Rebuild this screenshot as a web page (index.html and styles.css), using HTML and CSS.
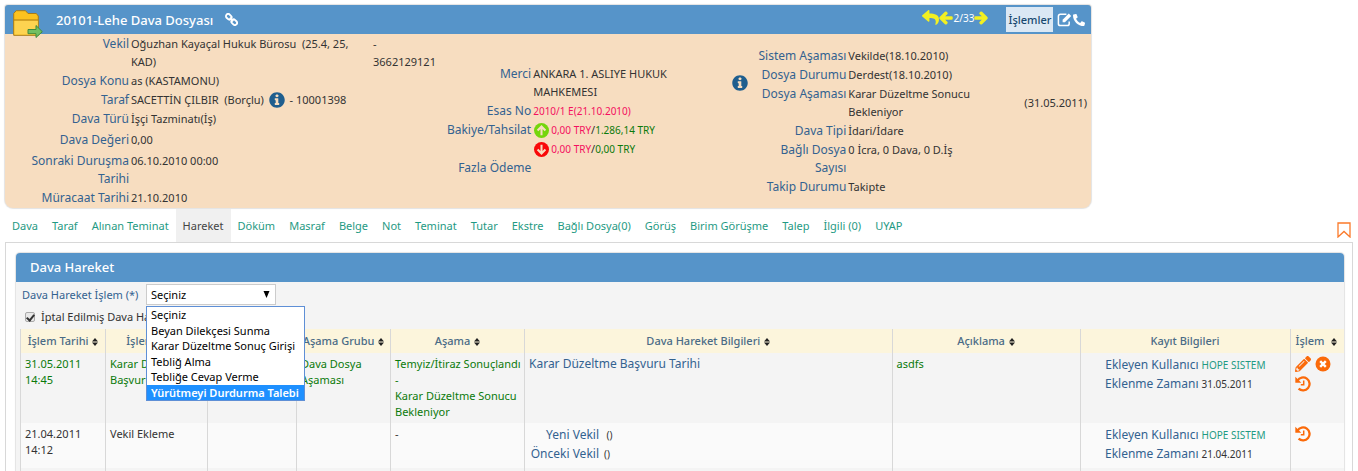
FILE: index.html
```html
<!DOCTYPE html>
<html lang="tr">
<head>
<meta charset="utf-8">
<title>Dava Dosyası</title>
<link rel="stylesheet" href="styles.css">
</head>
<body>
<svg class="sprite" aria-hidden="true">
  <symbol id="i-info" viewBox="0 0 512 512"><path d="M256 8C119.043 8 8 119.083 8 256c0 136.997 111.043 248 248 248s248-111.003 248-248C504 119.083 392.957 8 256 8zm0 70c30 0 50 18 50 44s-20 44-50 44-50-18-50-44 20-44 50-44zm72 322c0 8-5 14-12 14h-120c-7 0-12-6-12-14v-34c0-8 5-12 12-12h18v-94h-18c-7 0-12-5-12-12v-34c0-8 5-12 12-12h90c7 0 12 5 12 12v140h18c7 0 12 5 12 12v34z"/></symbol>
  <symbol id="i-reply" viewBox="0 0 512 512"><path d="M8.309 189.836L184.313 37.851C199.719 24.546 224 35.347 224 56.015v80.053c160.629 1.839 288 34.032 288 186.258 0 61.441-39.581 122.309-83.333 154.132-13.653 9.931-33.111-2.533-28.077-18.631 45.344-145.012-21.507-183.51-176.59-185.742V360c0 20.7-24.3 31.453-39.687 18.164l-176.004-152c-11.071-9.562-11.086-26.753 0-36.328z"/></symbol>
  <symbol id="i-arrow" viewBox="0 0 448 512"><path stroke="currentColor" stroke-width="44" d="M257.5 445.1l-22.2 22.2c-9.4 9.4-24.6 9.4-33.9 0L7 273c-9.4-9.4-9.4-24.6 0-33.9L201.4 44.7c9.4-9.4 24.6-9.4 33.9 0l22.2 22.2c9.5 9.5 9.3 25-.4 34.3L136.6 216H424c13.3 0 24 10.7 24 24v32c0 13.3-10.7 24-24 24H136.6l120.5 114.8c9.8 9.3 10 24.8.4 34.3z"/></symbol>
  <symbol id="i-phone" viewBox="0 0 512 512"><path d="M493.4 24.6l-104-24c-11.3-2.6-22.9 3.3-27.5 13.9l-48 112c-4.2 9.8-1.4 21.3 6.9 28l60.6 49.6c-36 76.7-98.9 140.5-177.2 177.2l-49.6-60.6c-6.8-8.3-18.2-11.1-28-6.9l-112 48C3.9 366.5-2 378.1.6 389.4l24 104C27.1 504.2 36.7 512 48 512c256.1 0 464-207.5 464-464 0-11.2-7.7-20.9-18.6-23.4z"/></symbol>
  <symbol id="i-pencil" viewBox="0 0 512 512"><path d="M497.9 142.1l-46.1 46.1c-4.7 4.7-12.3 4.7-17 0l-111-111c-4.7-4.7-4.7-12.3 0-17l46.1-46.1c18.7-18.7 49.1-18.7 67.9 0l60.1 60.1c18.8 18.7 18.8 49.1 0 67.9zM284.2 99.8L21.6 362.4.4 483.9c-2.9 16.4 11.4 30.6 27.8 27.8l121.5-21.3 262.6-262.6c4.7-4.7 4.7-12.3 0-17l-111-111c-4.8-4.7-12.4-4.7-17.1 0zM124.1 339.9c-5.5-5.5-5.5-14.3 0-19.8l154-154c5.5-5.5 14.3-5.5 19.8 0s5.5 14.3 0 19.8l-154 154c-5.5 5.5-14.3 5.5-19.8 0zM88 424h48v36.3l-64.5 11.3-31.1-31.1L51.7 376H88v48z"/></symbol>
  <symbol id="i-edit" viewBox="0 0 16 16"><path d="M10 2.5H3.5a2 2 0 0 0-2 2v8a2 2 0 0 0 2 2h7.500a2 2 0 0 0 2-2V10" fill="none" stroke="currentColor" stroke-width="1.600"/><path d="M6 8.300 12.600 1.700l2.500 2.500L8.500 10.800H6z"/></symbol>
  <symbol id="i-link" viewBox="0 0 16 16"><g fill="none" stroke="currentColor" stroke-width="2.300" transform="rotate(45 8 8)"><rect x="-.5" y="5.300" width="7.500" height="5.400" rx="2.700"/><rect x="9" y="5.300" width="7.500" height="5.400" rx="2.700"/><path d="M5 8h6"/></g></symbol>
  <symbol id="i-up" viewBox="0 0 16 16"><circle cx="8" cy="8" r="8"/><path d="M8 13V4M3.800 8 8 3.800 12.200 8" fill="none" stroke="#f7ddc0" stroke-width="2.200"/></symbol>
  <symbol id="i-cancel" viewBox="0 0 16 16"><circle cx="8" cy="8" r="7.500"/><path d="M5.200 5.200l5.600 5.600M10.800 5.200l-5.600 5.600" stroke="#fff" stroke-width="2.400"/></symbol>
  <symbol id="i-history" viewBox="0 0 16 16"><path d="M2.500 4.600A6.500 6.500 0 1 1 3.600 12.700" fill="none" stroke="currentColor" stroke-width="2.300"/><path d="M.3.800v6h6z"/><path d="M8.700 4.500v4.300H5.800" fill="none" stroke="currentColor" stroke-width="1.500"/></symbol>
  <symbol id="i-sort" viewBox="0 0 6 8"><path d="M3 0 6 3.400H0zM3 8 0 4.600h6z"/></symbol>
</svg>

<header class="case">
  <div class="case-bar">
    <svg class="folder" viewBox="0 0 30 28" aria-hidden="true">
      <path d="M.7 25.300V3.500l2.500-2.800h9.300l2.500 2.800h8.300l2 2.500v19.300z" fill="#fcc21f" stroke="#a87b18"/>
      <path d="M1.500 10.500h23.300v14H1.500z" fill="#fdd350"/><path d="M1 10h24" stroke="#a87b18"/>
      <path d="M15 19.500h8v-4l6.300 6.200-6.300 5.800v-3.800h-8z" fill="#72bf62" stroke="#3f8a3a"/>
    </svg>
    <h1>20101-Lehe Dava Dosyası</h1>
    <a class="link" href="#" aria-label="Bağlantı"><svg><use href="#i-link"/></svg></a>
    <nav class="pager" aria-label="Dosyalar">
      <a href="#" aria-label="Geri"><svg><use href="#i-reply"/></svg></a>
      <a href="#" aria-label="Önceki"><svg><use href="#i-arrow"/></svg></a>
      <span>2/33</span>
      <a href="#" aria-label="Sonraki"><svg class="flip"><use href="#i-arrow"/></svg></a>
    </nav>
    <button class="actions" type="button">İşlemler</button>
    <div class="tools">
      <a href="#" aria-label="Düzenle"><svg><use href="#i-edit"/></svg></a>
      <a href="#" aria-label="Telefon"><svg class="flip small"><use href="#i-phone"/></svg></a>
    </div>
  </div>
  <div class="case-body">
    <dl class="facts facts-party">
      <dt>Vekil</dt><dd>Oğuzhan Kayaçal Hukuk Bürosu &nbsp;(25.4, 25, KAD)</dd><dd class="extra">-<br>3662129121</dd>
      <dt>Dosya Konu</dt><dd>as (KASTAMONU)</dd>
      <dt>Taraf</dt><dd>SACETTİN ÇILBIR &nbsp;(Borçlu) <svg class="info"><use href="#i-info"/></svg> - 10001398</dd>
      <dt>Dava Türü</dt><dd>İşçi Tazminatı(İş)</dd>
      <dt>Dava Değeri</dt><dd>0,00</dd>
      <dt>Sonraki Duruşma Tarihi</dt><dd>06.10.2010 00:00</dd>
      <dt>Müracaat Tarihi</dt><dd>21.10.2010</dd>
    </dl>
    <dl class="facts facts-court">
      <dt>Merci</dt><dd>ANKARA 1. ASLIYE HUKUK MAHKEMESI</dd><dd class="extra"><svg class="info"><use href="#i-info"/></svg></dd>
      <dt>Esas No</dt><dd class="due">2010/1 E(21.10.2010)</dd>
      <dt>Bakiye/Tahsilat</dt>
      <dd class="money">
        <div><svg class="up"><use href="#i-up"/></svg><span class="due">0,00 TRY</span>/<span class="paid">1.286,14 TRY</span></div>
        <div><svg class="down"><use href="#i-up"/></svg><span class="due">0,00 TRY</span>/<span class="paid">0,00 TRY</span></div>
      </dd>
      <dt>Fazla Ödeme</dt><dd></dd>
    </dl>
    <dl class="facts facts-state">
      <dt>Sistem Aşaması</dt><dd>Vekilde(18.10.2010)</dd>
      <dt>Dosya Durumu</dt><dd>Derdest(18.10.2010)</dd>
      <dt>Dosya Aşaması</dt><dd>Karar Düzeltme Sonucu Bekleniyor</dd><dd class="extra">(31.05.2011)</dd>
      <dt>Dava Tipi</dt><dd>İdari/İdare</dd>
      <dt>Bağlı Dosya Sayısı</dt><dd>0 İcra, 0 Dava, 0 D.İş</dd>
      <dt>Takip Durumu</dt><dd>Takipte</dd>
    </dl>
  </div>
</header>

<nav class="tabs" aria-label="Sekmeler">
  <a href="#">Dava</a><a href="#">Taraf</a><a href="#">Alınan Teminat</a><a href="#" class="active" aria-current="page">Hareket</a><a href="#">Döküm</a><a href="#">Masraf</a><a href="#">Belge</a><a href="#">Not</a><a href="#">Teminat</a><a href="#">Tutar</a><a href="#">Ekstre</a><a href="#">Bağlı Dosya(0)</a><a href="#">Görüş</a><a href="#">Birim Görüşme</a><a href="#">Talep</a><a href="#">İlgili (0)</a><a href="#">UYAP</a>
  <button class="bookmark" type="button" aria-label="Yer imi"><svg viewBox="0 0 14 16"><path d="M1 1h12v14L7 9.500 1 15z" fill="none" stroke="currentColor" stroke-width="1.300"/></svg></button>
</nav>

<main class="pane">
  <section class="panel">
    <h2>Dava Hareket</h2>
    <form class="filters">
      <div class="field">
        <label for="islem">Dava Hareket İşlem (*)</label>
        <div class="combo">
          <select id="islem"><option>Seçiniz</option></select>
          <svg class="caret" viewBox="0 0 6 7" aria-hidden="true"><path d="M0 0h6L3 7z"/></svg>
          <ul class="options" role="listbox" aria-label="Dava Hareket İşlem">
            <li role="option">Seçiniz</li>
            <li role="option">Beyan Dilekçesi Sunma</li>
            <li role="option">Karar Düzeltme Sonuç Girişi</li>
            <li role="option">Tebliğ Alma</li>
            <li role="option">Tebliğe Cevap Verme</li>
            <li role="option" class="on" aria-selected="true">Yürütmeyi Durdurma Talebi</li>
          </ul>
        </div>
      </div>
      <div class="check">
        <input type="checkbox" id="iptal" checked>
        <label for="iptal">İptal Edilmiş Dava Hareket</label>
      </div>
    </form>
    <table>
      <colgroup><col class="c-date"><col class="c-op"><col class="c-note"><col class="c-group"><col class="c-stage"><col class="c-data"><col class="c-desc"><col class="c-rec"><col class="c-act"></colgroup>
      <thead>
        <tr>
          <th>İşlem Tarihi <svg><use href="#i-sort"/></svg></th>
          <th>İşlem Tipi <svg><use href="#i-sort"/></svg></th>
          <th></th>
          <th>Aşama Grubu <svg><use href="#i-sort"/></svg></th>
          <th>Aşama <svg><use href="#i-sort"/></svg></th>
          <th>Dava Hareket Bilgileri <svg><use href="#i-sort"/></svg></th>
          <th>Açıklama <svg><use href="#i-sort"/></svg></th>
          <th>Kayıt Bilgileri</th>
          <th class="left">İşlem &nbsp;<svg><use href="#i-sort"/></svg></th>
        </tr>
      </thead>
      <tbody>
        <tr class="current">
          <td>31.05.2011 14:45</td>
          <td>Karar Düzeltme Başvurusu</td>
          <td></td>
          <td>Dava Dosya Aşaması</td>
          <td>Temyiz/İtiraz Sonuçlandı<br>-<br>Karar Düzeltme Sonucu Bekleniyor</td>
          <td><span class="name">Karar Düzeltme Başvuru Tarihi</span></td>
          <td>asdfs</td>
          <td><dl class="record"><dt>Ekleyen Kullanıcı</dt><dd><a href="#">HOPE SISTEM</a></dd><dt>Eklenme Zamanı</dt><dd>31.05.2011</dd></dl></td>
          <td><div class="icons"><a href="#" aria-label="Düzenle"><svg><use href="#i-pencil"/></svg></a><a href="#" aria-label="İptal"><svg><use href="#i-cancel"/></svg></a><a href="#" aria-label="Geçmiş"><svg><use href="#i-history"/></svg></a></div></td>
        </tr>
        <tr>
          <td>21.04.2011 14:12</td>
          <td>Vekil Ekleme</td>
          <td></td>
          <td></td>
          <td>-</td>
          <td><dl class="record change"><dt>Yeni Vekil</dt><dd>&nbsp;()</dd><dt>Önceki Vekil</dt><dd>()</dd></dl></td>
          <td></td>
          <td><dl class="record"><dt>Ekleyen Kullanıcı</dt><dd><a href="#">HOPE SISTEM</a></dd><dt>Eklenme Zamanı</dt><dd>21.04.2011</dd></dl></td>
          <td><div class="icons"><a href="#" aria-label="Geçmiş"><svg><use href="#i-history"/></svg></a></div></td>
        </tr>
        <tr class="blank"><td></td><td></td><td></td><td></td><td></td><td></td><td></td><td></td><td></td></tr>
      </tbody>
    </table>
  </section>
</main>
</body>
</html>
```
FILE: styles.css
```css
:root {
  --blue: #5694c9;
  --label: #336290;
  --teal: #1f9a83;
  --orange: #fb6a0a;
  --line: #d8d8d8;
}

* { box-sizing: border-box; }

body {
  margin: 0;
  padding: 5px 5px 0;
  background: #fff;
  color: #333;
  font: 11px/18px "Noto Sans", "Open Sans", sans-serif;
}

h1, h2, dl, dd, ul { margin: 0; padding: 0; }
a { color: inherit; text-decoration: none; }
button, select, input { font: inherit; }
svg { fill: currentColor; }
.sprite { position: absolute; width: 0; height: 0; }
.flip { transform: scaleX(-1); }

/* Case summary */
.case {
  width: 80.600%;
  background: #f7ddc0;
  border-radius: 3px 3px 8px 8px;
  box-shadow: 0 0 1px 1px #e3e3e3;
}

.case-bar {
  display: flex;
  align-items: center;
  height: 29px;
  padding: 0 6px 0 8px;
  background: var(--blue);
  border-radius: 3px 3px 0 0;
  color: #fff;
}

.folder { width: 30px; height: 28px; margin: 8px 13px 0 0; }
h1 { font-size: 13px; font-weight: 500; }
.link { margin-left: 12px; }
.link svg { display: block; width: 13px; height: 13px; }

.pager {
  display: flex;
  align-items: center;
  margin: -4px 18px 0 auto;
  color: #f3f021;
}
.pager svg { display: block; width: 17px; height: 17px; overflow: visible; }
.pager a + a svg, .pager span + a svg { width: 14px; height: 14px; }
.pager a + a { margin-right: 1px; }
.pager span { color: #fff; font-size: 10px; }

.actions {
  width: 47px;
  height: 25px;
  padding: 0;
  border: 0;
  background: #dbe8f4;
  color: #16486f;
  font-weight: 500;
}

.tools { display: flex; align-items: center; gap: 1px; margin-left: 4px; }
.tools svg { display: block; width: 15px; height: 15px; }
.tools .small { width: 12px; height: 12px; }

.case-body {
  display: grid;
  grid-template-columns: 440fr 311fr 335fr;
  align-items: center;
  padding: 1px 0;
}

.facts { display: grid; column-gap: 2px; row-gap: 1px; }
.facts dt { grid-column: 1; color: var(--label); font-size: 12px; text-align: right; }
.facts dd { grid-column: 2; }
.facts .extra { grid-column: 3; align-self: center; }
.facts-party {
  grid-template-columns: 124px 240px 1fr;
  grid-template-rows: auto auto auto 20px 20px;
}
.facts-party dt { padding-left: 24px; }
.facts-court { grid-template-columns: 86px 197px 1fr; }
.facts-state { grid-template-columns: 90px 174px 1fr; }

.info { width: 16px; height: 16px; margin: 0 2px; color: #1f5e8e; vertical-align: -4px; }
.facts .extra .info { display: block; margin: 0; }
.due { color: #f4105f; font-size: 10px; }
.paid { color: #0b7a0b; font-size: 10px; }
.money { display: grid; gap: 1px; }
.money div { display: flex; align-items: center; }
.money svg { width: 15px; height: 15px; margin: 0 2px 0 1px; }
.up { color: #74d60c; }
.down { color: #f90808; transform: rotate(180deg); }

/* Tabs */
.tabs { display: flex; height: 34px; padding-top: 1px; color: var(--teal); }
.tabs a { padding: 8px 7px 0; }
.tabs .active { background: #f0f0f0; color: #444; }
.bookmark {
  align-self: flex-end;
  margin-left: auto;
  padding: 0 2px 4px;
  border: 0;
  background: none;
  color: #fb7a2a;
}
.bookmark svg { display: block; width: 14px; height: 16px; }

/* Movement panel */
.pane { padding: 10px 8px 0 10px; border: 1px solid var(--line); border-bottom: 0; }

.panel {
  background: #f4f4f4;
  border-radius: 4px 4px 0 0;
  box-shadow: 0 0 1px 1px #e3e3e3;
}

h2 {
  padding: 0 14px;
  background: var(--blue);
  border-radius: 4px 4px 0 0;
  color: #fff;
  font-size: 13px;
  font-weight: 500;
  line-height: 29px;
}

.filters { padding: 2px 6px 0; }
.field { display: flex; align-items: center; gap: 4px; color: var(--label); }
.field label { min-width: 120px; }
.combo { position: relative; color: #000; }
.combo select {
  display: block;
  width: 130px;
  height: 21px;
  padding: 0 4px;
  appearance: none;
  border: 1px solid #ccc;
  border-radius: 0;
  background: #fff;
  color: #000;
}
.caret { position: absolute; top: 7px; right: 6px; width: 7px; height: 7px; }

.options {
  position: absolute;
  z-index: 2;
  top: 22px;
  left: 0;
  display: grid;
  grid-auto-rows: 1fr;
  width: 159px;
  height: 95px;
  border: 1px solid #5e8fd6;
  background: #fff;
  line-height: 15px;
  list-style: none;
  white-space: nowrap;
}
.options li { padding: 0 4px; overflow: hidden; }
.options .on { background: #1e90ff; color: #fff; font-weight: 600; }

.check { display: flex; align-items: center; gap: 6px; height: 24px; padding-left: 3px; }
.check input {
  display: grid;
  place-items: center;
  width: 10px;
  height: 10px;
  margin: 0;
  appearance: none;
  border: 1px solid #aaa;
  border-radius: 2px;
  background: #e8e8e8;
}
.check input:checked::after {
  content: "";
  width: 3px;
  height: 6px;
  margin-bottom: 2px;
  border: solid #333;
  border-width: 0 2px 2px 0;
  transform: rotate(40deg);
}

table { border-collapse: collapse; table-layout: fixed; line-height: 16px; }
.panel table { width: calc(100% - 4px); margin-left: 4px; }
th, td { border-left: 1px solid var(--line); text-align: left; vertical-align: top; }
th {
  height: 24px;
  padding: 0;
  background: #fcf5dc;
  color: #4a6b86;
  font-weight: 500;
  text-align: center;
  vertical-align: middle;
  white-space: nowrap;
}
th.left { padding-left: 5px; text-align: left; }
th svg { width: 6px; height: 8px; margin-left: 1px; color: #222; vertical-align: -1px; }
td { height: 45px; padding: 3px 0 3px 4px; background: #fafafa; }
.current td { height: 70px; background: #f4f4f4; color: #0b7a0b; }
.current .name { color: var(--label); font-size: 12px; }
.blank td { height: 3px; padding: 0; background: #f4f4f4; }

.c-date { width: 85px; }
.c-op { width: 102px; }
.c-note { width: 89px; }
.c-group { width: 94px; }
.c-stage { width: 134px; }
.c-desc { width: 188px; }
.c-rec { width: 210px; }
.c-act { width: 54px; }

td:first-child { padding-right: 16px; }

.record {
  display: grid;
  grid-template-columns: 114px 1fr;
  column-gap: 3px;
  row-gap: 1px;
  color: #333;
  line-height: 18px;
}
.record dt { color: var(--label); font-size: 12px; text-align: right; }
.record a { color: var(--teal); }
.record dd { font-size: 10px; }
.record.change { grid-template-columns: 70px 1fr; column-gap: 5px; }

.icons { display: flex; flex-wrap: wrap; gap: 4px; color: var(--orange); }
.icons svg { display: block; width: 16px; height: 16px; }
```
